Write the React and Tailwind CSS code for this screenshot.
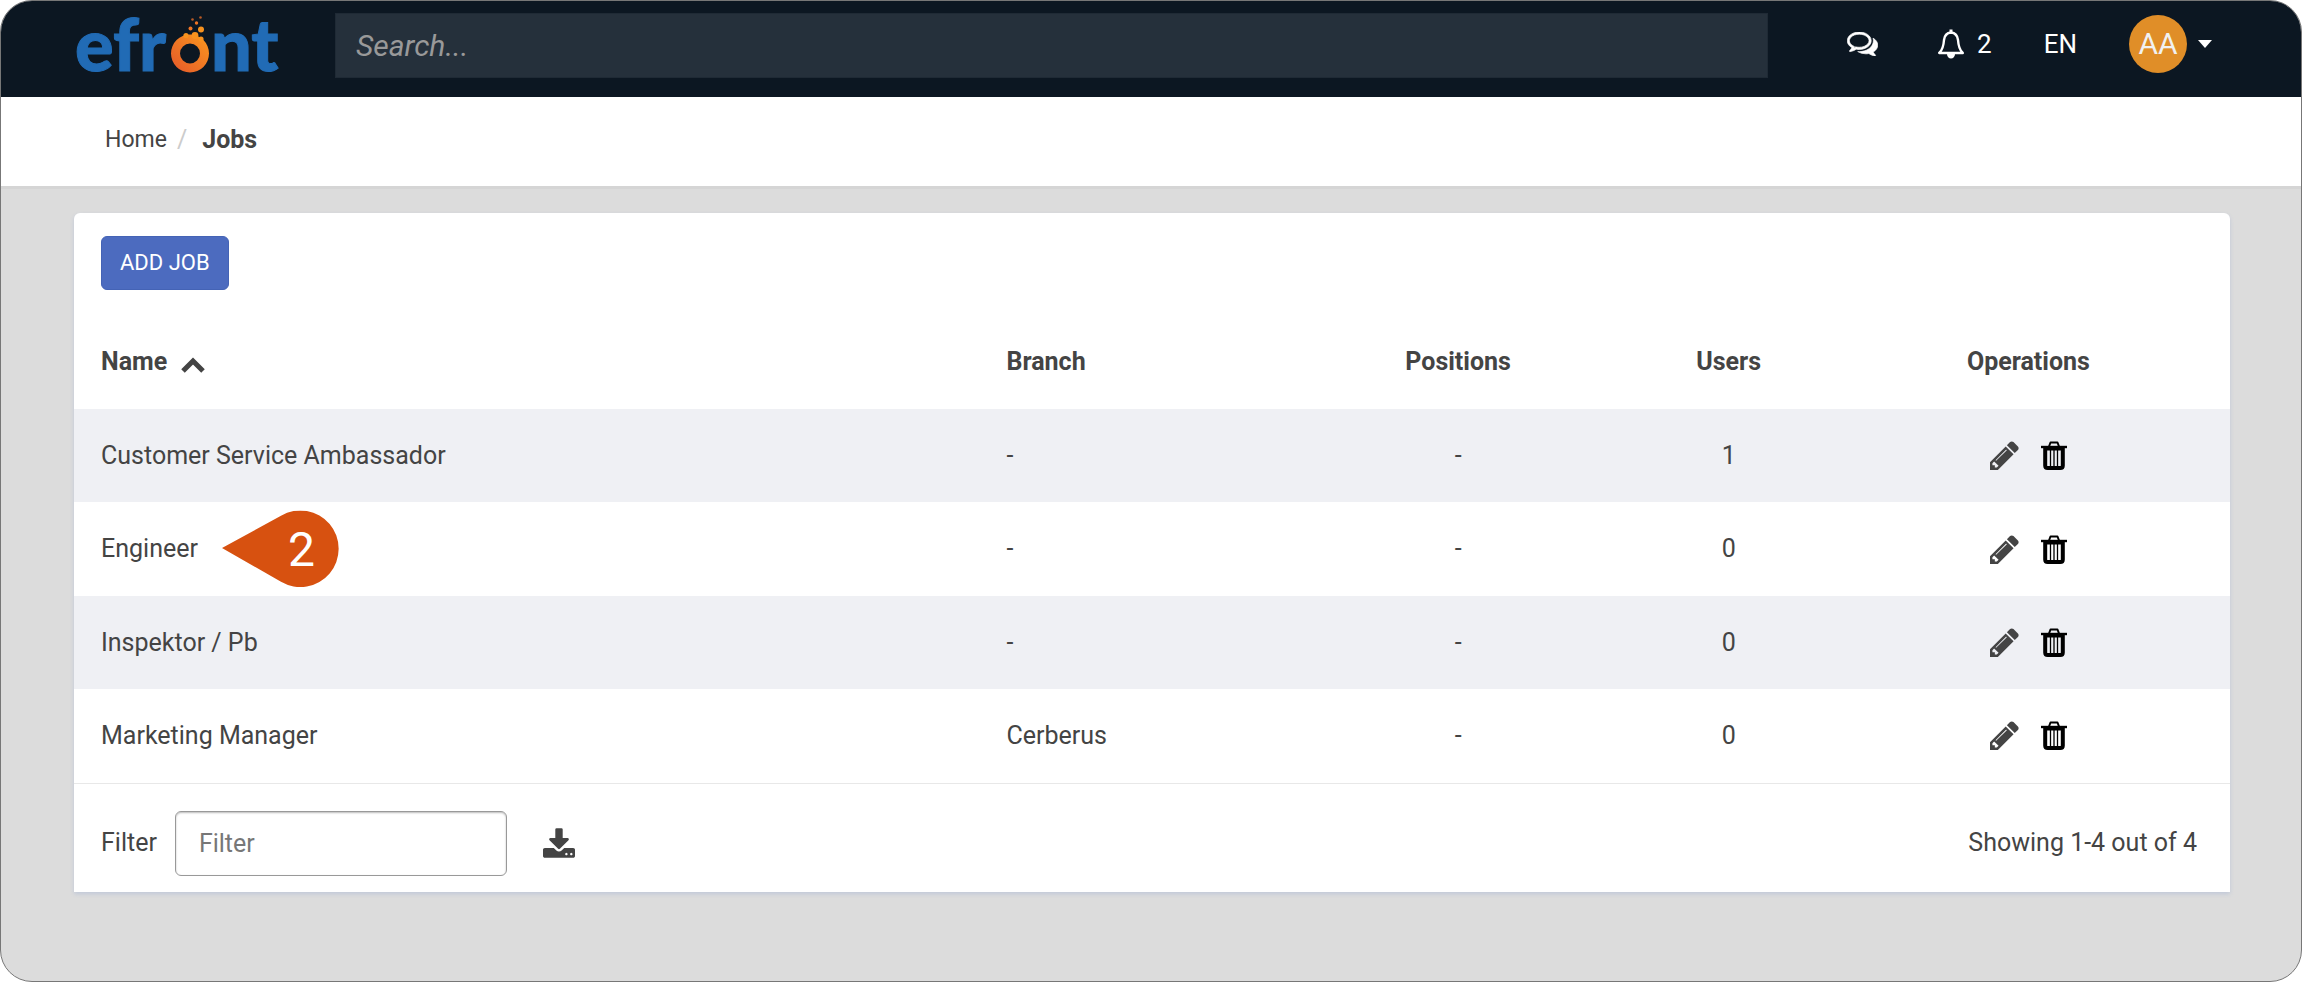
import React, { useState } from 'react';

const jobs = [
  { name: 'Customer Service Ambassador', branch: '-', positions: '-', users: 1 },
  { name: 'Engineer', branch: '-', positions: '-', users: 0, marker: 2 },
  { name: 'Inspektor / Pb', branch: '-', positions: '-', users: 0 },
  { name: 'Marketing Manager', branch: 'Cerberus', positions: '-', users: 0 }
];

const Logo = () => (
  <svg viewBox="0 -15 206 96" className="h-24 w-[206px]" role="img" aria-label="efront">
    <defs>
      <linearGradient id="ring" x1="0" y1="1" x2="1" y2="0">
        <stop offset="0" stopColor="#e4572a" />
        <stop offset="1" stopColor="#fa981e" />
      </linearGradient>
    </defs>
    <g fill="#216bb5" stroke="#216bb5" strokeWidth="1" fontFamily="Lato" fontWeight="900" fontSize="72">
      <text x="0" y="55">efr</text>
      <text x="136" y="55">nt</text>
    </g>
    <path
      fill="url(#ring)"
      fillRule="evenodd"
      d="M115 18.500a19 19 0 1 0 0 38 19 19 0 0 0 0-38zm0 9a10 10 0 1 1 0 20 10 10 0 0 1 0-20z"
    />
    <g fill="#f7921e">
      <circle cx="111" cy="19.500" r="2.6" />
      <circle cx="120" cy="19.500" r="3.4" />
      <circle cx="126" cy="23" r="2.6" />
      <circle cx="126" cy="13.500" r="3" />
      <circle cx="115.500" cy="12.500" r="2" fill="#ee7424" />
      <circle cx="121.500" cy="7" r="1.7" fill="#ee7424" />
      <circle cx="117.500" cy="3.500" r="1.3" fill="#b95a25" />
      <circle cx="125.500" cy="1.500" r="1.3" fill="#b95a25" />
    </g>
  </svg>
);

const CommentsIcon = () => (
  <svg viewBox="0 256 1792 1408" className="h-6 w-[31px]" fill="currentColor" stroke="currentColor" strokeWidth="40" aria-hidden="true">
    <path d="M704 384q-153 0-286 52t-211.5 141-78.5 191q0 82 53 158t149 132l97 56-35 84q34-20 62-39l44-31 53 10q78 14 153 14 153 0 286-52t211.5-141 78.5-191-78.5-191-211.5-141-286-52zm0-128q191 0 353.5 68.5t256.5 186.5 94 257-94 257-256.5 186.5-353.5 68.5q-86 0-176-16-124 88-278 128-36 9-86 16h-3q-11 0-20.5-8t-11.5-21q-1-3-1-6.5t.5-6.5 2-6l2.5-5 3.5-5.5 4-5 4.5-5 4-4.5q5-6 23-25t26-29.5 22.5-29 25-38.5 20.5-44q-124-72-195-177t-71-224q0-139 94-257t256.5-186.5 353.5-68.5zm822 1169q10 24 20.5 44t25 38.5 22.5 29 26 29.5 23 25q1 1 4 4.5t4.5 5 4 5 3.5 5.5l2.5 5 2 6 .5 6.5-1 6.5q-3 14-13 22t-22 7q-50-7-86-16-154-40-278-128-90 16-176 16-271 0-472-132 58 4 88 4 161 0 309-45t264-129q125-92 192-212t67-254q0-77-23-152 129 71 204 178t75 230q0 120-71 224.5t-195 176.5z" />
  </svg>
);

const BellIcon = () => (
  <svg viewBox="0 0 28 30" className="h-[30px] w-7" fill="none" aria-hidden="true">
    <path
      d="M14 3.500C9.500 4 7.500 6.500 7 11c-.4 6-1.500 10-4.800 13h23.600c-3.300-3-4.400-7-4.800-13-.5-4.500-2.500-7-7-7.500z"
      stroke="currentColor"
      strokeWidth="2.400"
      strokeLinejoin="round"
    />
    <path d="M12.500 0.500h3v3h-3zM10 25h8a4 4.500 0 0 1-8 0z" fill="currentColor" />
  </svg>
);

const PencilIcon = () => (
  <svg viewBox="128 128 1536 1536" className="size-[29px]" fill="currentColor" aria-hidden="true">
    <path d="M491 1536l91-91-235-235-91 91v107h128v128h107zm523-928q0-22-22-22-10 0-17 7l-542 542q-7 7-7 17 0 22 22 22 10 0 17-7l542-542q7-7 7-17zm-54-192l416 416-832 832h-416v-416zm683 96q0 53-37 90l-166 166-416-416 166-165q36-38 90-38 53 0 91 38l235 234q37 39 37 91z" />
  </svg>
);

const TrashIcon = () => (
  <svg viewBox="0 0 26 29" className="h-[29px] w-[26px]" fill="none" stroke="currentColor" aria-hidden="true">
    <path d="M8 5.500l1.500-4h7l1.500 4" strokeWidth="2" strokeLinejoin="round" />
    <path d="M0 6h26" strokeWidth="2.400" />
    <path d="M4.200 6v18.500q0 2.500 2.500 2.500h12.600q2.500 0 2.500-2.500V6" strokeWidth="4" />
    <path d="M3 7.500h20" strokeWidth="4" />
    <path d="M9.500 9v17M13 9v17M16.500 9v17" strokeWidth="1.300" />
  </svg>
);

const DownloadIcon = () => (
  <svg viewBox="64 0 1664 1536" className="h-[30px] w-8" fill="currentColor" aria-hidden="true">
    <path d="M1344 1344q0-26-19-45t-45-19-45 19-19 45 19 45 45 19 45-19 19-45zm256 0q0-26-19-45t-45-19-45 19-19 45 19 45 45 19 45-19 19-45zm128-224v320q0 40-28 68t-68 28h-1472q-40 0-68-28t-28-68v-320q0-40 28-68t68-28h465l135 136q58 56 136 56t136-56l136-136h464q40 0 68 28t28 68zm-325-569q17 41-14 70l-448 448q-18 19-45 19t-45-19l-448-448q-31-29-14-70 17-39 59-39h256v-448q0-26 19-45t45-19h256q26 0 45 19t19 45v448h256q42 0 59 39z" />
  </svg>
);

const Marker = ({ value }) => (
  <span className="absolute top-1/2 left-full ml-6 h-[77px] w-[118px] -translate-y-1/2">
    <svg viewBox="0 0 118 77" className="size-full" aria-hidden="true">
      <path d="M0 37.500L59 5.200A38.300 38.300 0 1 1 59 71.300z" fill="#d75110" />
    </svg>
    <span className="absolute inset-y-0 right-0 flex w-[77px] items-center justify-center text-5xl text-white">
      {value}
    </span>
  </span>
);

const TopBar = () => (
  <header className="flex h-24 items-center bg-[#0c1722] pr-[89px] pl-[74px] text-[26px] text-white">
    <a href="#home" className="mr-[54px] shrink-0">
      <Logo />
    </a>
    <input
      type="search"
      aria-label="Search"
      placeholder="Search..."
      className="-mt-2 h-[65px] min-w-0 flex-1 border border-[#1f2a35] bg-[#25303b] px-5 text-3xl outline-none placeholder:text-[#999] placeholder:italic"
    />
    <nav className="-mt-2.5 flex shrink-0 items-center pl-[79px]">
      <button type="button" aria-label="Messages" className="mr-[59px]">
        <CommentsIcon />
      </button>
      <button type="button" aria-label="Notifications" className="mr-[52px] flex items-center gap-3">
        <BellIcon />
        <span>2</span>
      </button>
      <button type="button" className="mr-[52px]">EN</button>
      <button type="button" aria-label="Account" className="flex items-center gap-[11px]">
        <span className="flex size-[58px] items-center justify-center rounded-full bg-[#e08e28] text-3xl text-[#f1f1f1]">
          AA
        </span>
        <svg viewBox="0 0 14 8" className="h-2 w-3.5" fill="currentColor" aria-hidden="true">
          <path d="M0 0h14L7 8z" />
        </svg>
      </button>
    </nav>
  </header>
);

const App = () => {
  const [filter, setFilter] = useState('');

  const visibleJobs = jobs.filter(job => job.name.toLowerCase().includes(filter.toLowerCase()));

  return (
    <div className="min-h-screen overflow-hidden rounded-[32px] border border-[#777] bg-[#dcdcdc] font-[Roboto,sans-serif] text-[25px] leading-9 text-[#444]">
      <TopBar />

      <nav aria-label="Breadcrumb" className="flex h-[92px] items-center border-b-3 border-[#d5d5d5] bg-white px-[104px] pb-1">
        <a href="#home" className="text-[23px]">Home</a>
        <span className="ml-[10px] text-[#ccc]">/</span>
        <span className="ml-[15px] font-bold">Jobs</span>
      </nav>

      <main className="pt-6 pr-[71px] pl-[73px]">
        <section className="rounded-t-md bg-white shadow-[0_2px_4px_#c0c8d8]">
          <div className="px-[27px] pt-[23px]">
            <button
              type="button"
              className="h-[54px] rounded-md border border-[#4463b5] bg-[#4c6bbf] px-[18px] text-[22px] text-white"
            >
              ADD JOB
            </button>
          </div>

          <table className="mt-[25px] w-full table-fixed border-b border-[#e8e8e8] text-center">
            <colgroup>
              <col className="w-[42%]" />
              <col className="w-[14.2%]" />
              <col className="w-[16%]" />
              <col className="w-[9.1%]" />
              <col />
            </colgroup>
            <thead>
              <tr className="h-[94px] font-bold">
                <th className="px-[27px] text-left">
                  <button type="button" className="flex items-center gap-[14px]">
                    Name
                    <svg viewBox="0 0 24 16" className="mt-1.5 h-4 w-6" fill="none" stroke="currentColor" strokeWidth="5" aria-hidden="true">
                      <path d="M2 14L12 4l10 10" />
                    </svg>
                  </button>
                </th>
                <th className="px-[27px] text-left">Branch</th>
                <th>Positions</th>
                <th>Users</th>
                <th>Operations</th>
              </tr>
            </thead>
            <tbody>
              {visibleJobs.map(job => (
                <tr key={job.name} className="h-[94px] odd:h-[93px] odd:bg-[#eff0f4]">
                  <td className="px-[27px] text-left">
                    <span className="relative inline-block">
                      {job.name}
                      {job.marker && <Marker value={job.marker} />}
                    </span>
                  </td>
                  <td className="px-[27px] text-left">{job.branch}</td>
                  <td>{job.positions}</td>
                  <td>{job.users}</td>
                  <td>
                    <div className="flex items-center justify-center gap-[22px]">
                      <button type="button" aria-label={`Edit ${job.name}`}>
                        <PencilIcon />
                      </button>
                      <button type="button" aria-label={`Delete ${job.name}`} className="text-black">
                        <TrashIcon />
                      </button>
                    </div>
                  </td>
                </tr>
              ))}
            </tbody>
          </table>

          <div className="flex items-center px-[27px] pt-[27px] pb-4">
            <label htmlFor="filter">Filter</label>
            <input
              id="filter"
              type="text"
              placeholder="Filter"
              value={filter}
              onChange={e => setFilter(e.target.value)}
              className="ml-[18px] h-[65px] w-[332px] rounded-md border border-[#999] px-[23px] shadow-[inset_0_1px_2px_#bbb] placeholder:text-[#777]"
            />
            <button type="button" aria-label="Download" className="ml-[36px]">
              <DownloadIcon />
            </button>
            <span className="ml-auto pr-[6px]">
              Showing 1-{visibleJobs.length} out of {jobs.length}
            </span>
          </div>
        </section>
      </main>
    </div>
  );
};

export default App;
